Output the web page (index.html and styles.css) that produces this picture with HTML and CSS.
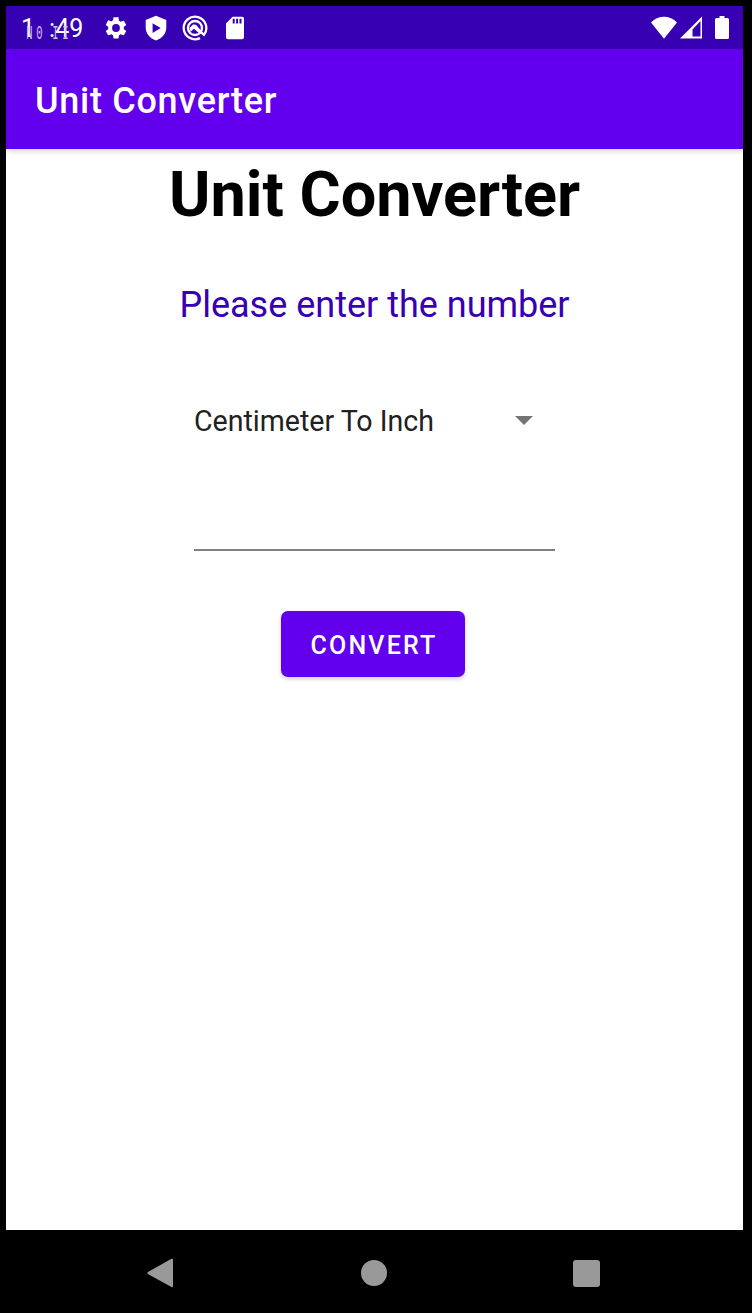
FILE: index.html
```html
<!DOCTYPE html>
<html lang="en">
<head>
<meta charset="utf-8">
<title>Unit Converter</title>
<link rel="stylesheet" href="styles.css">
</head>
<body>
<div class="device">
  <header class="status">
    <div class="clock"><span>1</span><span class="colon">:</span><span>49</span><span class="ghost" aria-hidden="true"><i>N</i><i>0</i><i class="late">I</i><i>I</i></span></div>
    <svg class="icon gear" viewBox="0 0 24 24"><path d="M19.14 12.94c.04-.3.06-.61.06-.94 0-.32-.02-.64-.07-.94l2.03-1.58a.49.49 0 0 0 .12-.61l-1.92-3.32a.49.49 0 0 0-.59-.22l-2.39.96c-.5-.38-1.03-.7-1.62-.94l-.36-2.54A.48.48 0 0 0 13.92 2h-3.84c-.24 0-.43.17-.47.41l-.36 2.54c-.59.24-1.13.57-1.62.94l-2.39-.96a.48.48 0 0 0-.59.22L2.74 8.87c-.12.21-.08.47.12.61l2.03 1.58c-.05.3-.09.63-.09.94s.02.64.07.94l-2.03 1.58a.49.49 0 0 0-.12.61l1.92 3.32c.12.22.37.29.59.22l2.39-.96c.5.38 1.03.7 1.62.94l.36 2.54c.05.24.24.41.48.41h3.84c.24 0 .44-.17.47-.41l.36-2.54c.59-.24 1.13-.56 1.62-.94l2.39.96c.22.08.47 0 .59-.22l1.92-3.32a.49.49 0 0 0-.12-.61zM12 15.6A3.6 3.6 0 1 1 12 8.4a3.6 3.6 0 0 1 0 7.2z"/></svg>
    <svg class="icon shield" viewBox="0 0 26 26"><path fill-rule="evenodd" d="M13 .8 23.3 5v7.5c0 6-4.2 11-10.3 12.900-6.100-1.900-10.300-6.900-10.300-12.900V5zM9.600 8.200v9.800l8.100-4.900z"/></svg>
    <svg class="icon search" viewBox="0 0 26 26"><g fill="none" stroke="#fff" stroke-width="2.300"><path d="M18 23.100A11.300 11.300 0 1 1 22 19.800L18.500 16.800"/><circle cx="13" cy="13" r="7"/></g><path d="m7.500 13 3.500-3.500 3 .2 6 7-2 2.300-6-5.200-3.500 3z"/></svg>
    <svg class="icon card" viewBox="0 0 20 24"><path fill-rule="evenodd" d="M7.600.8H17a2 2 0 0 1 2 2v18.400a2 2 0 0 1-2 2H3a2 2 0 0 1-2-2V7.400zM7.700 2.800v4.800h2V2.800zm3.400 0v4.800h2V2.800zm3.400 0v4.800h2V2.800z"/></svg>
    <div class="signals">
      <svg class="wifi" viewBox="0 0 26 23"><path d="M13 22.700 0 6.500C7-1.200 19-1.200 26 6.500z"/></svg>
      <svg class="cell" viewBox="0 0 22 23"><path fill-rule="evenodd" d="M22 .5v22H0zM20.500 5l-8 8.500v7h8z"/></svg>
      <svg class="battery" viewBox="0 0 14 24"><path d="M4.500 0h5v2H12.500a1.500 1.500 0 0 1 1.500 1.500v18a1.500 1.500 0 0 1-1.500 1.500h-11A1.500 1.500 0 0 1 0 21.500v-18A1.500 1.500 0 0 1 1.500 2h3z"/></svg>
    </div>
  </header>
  <div class="appbar">Unit Converter</div>
  <main class="content">
    <h1 class="heading">Unit Converter</h1>
    <p class="prompt">Please enter the number</p>
    <div class="spinner"><span class="choice">Centimeter To Inch</span><svg class="caret" viewBox="0 0 18 9"><path d="M0 0h18L9 9z"/></svg></div>
    <input class="field" type="text" aria-label="Number">
    <button class="convert">CONVERT</button>
  </main>
  <nav class="navbar">
    <svg class="back" viewBox="0 0 26 30"><path d="M24.500.8Q26 .2 26 2v26q0 1.800-1.500 1L.8 15.900q-1-.9 0-1.800z"/></svg>
    <span class="home"></span>
    <span class="recent"></span>
  </nav>
</div>
</body>
</html>
```
FILE: styles.css
```css
* { box-sizing: border-box; }
body { margin: 0; background: #000; font-family: Roboto, sans-serif; }
.device { width: 752px; height: 1313px; padding: 6px 9px 0 6px; display: flex; flex-direction: column; overflow: hidden; }
svg { display: block; flex: none; fill: #fff; }
.status { height: 43px; flex: none; background: #3700b3; display: flex; align-items: center; padding: 0 14px 0 15px; }
.clock { position: relative; width: 63px; height: 43px; display: flex; font-size: 25px; line-height: 46px; color: #fff; }
.colon { margin-left: 14px; }
.ghost { position: absolute; left: 6px; top: 17px; display: flex; gap: 5px; font-family: "Liberation Mono", monospace; font-size: 21px; line-height: 21px; color: #d4c6f2; }
.ghost i { font-style: normal; width: 5px; display: flex; justify-content: center; transform: scaleX(.5); }
.ghost .late { margin-left: 6px; }
.gear { width: 26px; height: 26px; margin-left: 19px; }
.shield { width: 26px; height: 26px; margin-left: 13.500px; }
.search { width: 26px; height: 26px; margin-left: 13.500px; }
.card { width: 20px; height: 24px; margin-left: 17px; }
.signals { margin-left: auto; display: flex; align-items: center; }
.wifi { width: 26px; height: 23px; }
.cell { width: 22px; height: 23px; margin-left: 3px; }
.battery { width: 14px; height: 24px; margin-left: 13px; }
.appbar { position: relative; height: 100px; flex: none; background: #6200ee; color: #fff; font-size: 36px; font-weight: 500; line-height: 104px; padding-left: 29px; letter-spacing: .71px; box-shadow: 0 1px 7px rgba(0,0,0,.22); clip-path: inset(0 0 -12px 0); }
.content { height: 1081px; flex: none; background: #fff; display: flex; flex-direction: column; align-items: center; }
.heading { margin: 9px 0 0; font-size: 63px; line-height: 74px; font-weight: 700; white-space: nowrap; }
.prompt { margin: 52px 0 0; font-size: 36px; line-height: 42px; color: #3700b3; white-space: nowrap; }
.spinner { width: 361px; height: 44px; margin-top: 72px; padding: 0 22px 0 0; display: flex; align-items: center; justify-content: space-between; font-size: 28.570px; color: #212121; white-space: nowrap; }
.choice { padding-top: 2px; }
.caret { width: 18px; height: 9px; fill: #757575; }
.field { width: 361px; height: 66px; margin-top: 43px; padding: 0; border: 0; border-bottom: 2px solid #808080; border-radius: 0; background: none; outline: 0; font: 32px Roboto, sans-serif; }
.convert { width: 184px; height: 66px; margin: 60px 3px 0 0; padding: 2px 0 0 2px; border: 0; border-radius: 7px; background: #6200ee; color: #fff; font: 500 25px Roboto, sans-serif; letter-spacing: 2.200px; box-shadow: 0 2px 4px rgba(0,0,0,.2); }
.navbar { flex: 1; display: flex; align-items: center; padding: 3px 0 0 141px; }
.back { width: 26px; height: 30px; fill: #999; }
.home { width: 26px; height: 26px; margin-left: 188.400px; border-radius: 50%; background: #999; }
.recent { width: 27px; height: 27px; margin-left: 185.600px; border-radius: 3px; background: #999; }
```
